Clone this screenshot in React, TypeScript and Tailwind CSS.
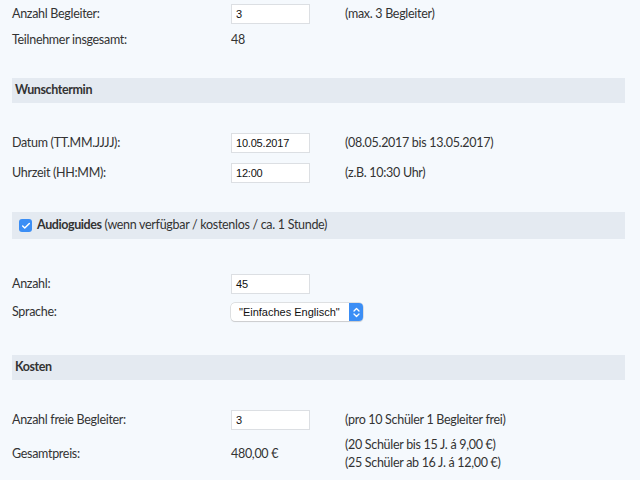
import { Check } from "lucide-react";

const font = "font-['Lato','Noto_Sans',sans-serif]";

function Input({ value }: { value: string }) {
  return (
    <div className="w-[79px] h-[20px] bg-white border border-[#dcdfe3] flex items-center pl-[4px] font-['Liberation_Sans',Arial,sans-serif] text-[11px] tracking-[-0.2px] text-[#111]">
      {value}
    </div>
  );
}

function Row({ label, children, hint, className = "" }: { label: string; children?: React.ReactNode; hint?: React.ReactNode; className?: string }) {
  return (
    <div className={`flex items-center h-[20px] ${className}`}>
      <div className="w-[219px] shrink-0">{label}</div>
      <div className="w-[114px] shrink-0">{children}</div>
      <div>{hint}</div>
    </div>
  );
}

function Bar({ children, className = "" }: { children: React.ReactNode; className?: string }) {
  return (
    <div className={`flex items-center bg-[#e4eaf1] pl-[3px] ${className}`}>{children}</div>
  );
}

export default function App() {
  return (
    <div className={`w-[640px] h-[480px] overflow-hidden bg-[#f5f9fd] pl-[12px] pr-[15px] text-[12.5px] tracking-[-0.3px] text-[#333] ${font}`}>
      <Row label="Anzahl Begleiter:" className="mt-[4px]" hint="(max. 3 Begleiter)">
        <Input value="3" />
      </Row>
      <Row label="Teilnehmer insgesamt:" className="mt-[6px]">48</Row>

      <Bar className="mt-[28px] h-[25px] font-bold tracking-[-0.4px]">Wunschtermin</Bar>

      <Row label="Datum (TT.MM.JJJJ):" className="mt-[30px]" hint="(08.05.2017 bis 13.05.2017)">
        <Input value="10.05.2017" />
      </Row>
      <Row label="Uhrzeit (HH:MM):" className="mt-[10px]" hint="(z.B. 10:30 Uhr)">
        <Input value="12:00" />
      </Row>

      <Bar className="mt-[29px] h-[27px] pl-[7px] gap-[5px]">
        <span className="w-[13px] h-[13px] rounded-[3px] bg-[#3b8ef5] flex items-center justify-center">
          <Check size={10} strokeWidth={3.5} className="text-white" />
        </span>
        <span>
          <b className="tracking-[-0.4px]">Audioguides</b> (wenn verfügbar / kostenlos / ca. 1 Stunde)
        </span>
      </Bar>

      <Row label="Anzahl:" className="mt-[35px]">
        <Input value="45" />
      </Row>
      <Row label="Sprache:" className="mt-[8px]">
        <div className="w-[132px] h-[18px] bg-white rounded-[4px] shadow-[0_0_0_0.5px_#c8c8c8,0_1px_1px_rgba(0,0,0,0.15)] flex items-center font-['Liberation_Sans',Arial,sans-serif] text-[11px] tracking-normal text-[#111]">
          <span className="flex-1 pl-[8px]">"Einfaches Englisch"</span>
          <span className="w-[14px] h-[18px] rounded-r-[4px] bg-[#3b8ef5] flex flex-col items-center justify-center">
            <svg width="7" height="11" viewBox="0 0 7 11" fill="none" stroke="white" strokeWidth="1.3" strokeLinecap="round" strokeLinejoin="round">
              <path d="M1 4 L3.5 1.5 L6 4" />
              <path d="M1 7 L3.5 9.5 L6 7" />
            </svg>
          </span>
        </div>
      </Row>

      <Bar className="mt-[33px] h-[25px] font-bold tracking-[-0.4px]">Kosten</Bar>

      <Row label="Anzahl freie Begleiter:" className="mt-[30px]" hint="(pro 10 Schüler 1 Begleiter frei)">
        <Input value="3" />
      </Row>
      <div className="flex items-center h-[36px] mt-[6px]">
        <div className="w-[219px] shrink-0">Gesamtpreis:</div>
        <div className="w-[114px] shrink-0">480,00 €</div>
        <div className="leading-[18px]">
          <div>(20 Schüler bis 15 J. á 9,00 €)</div>
          <div>(25 Schüler ab 16 J. á 12,00 €)</div>
        </div>
      </div>
    </div>
  );
}
